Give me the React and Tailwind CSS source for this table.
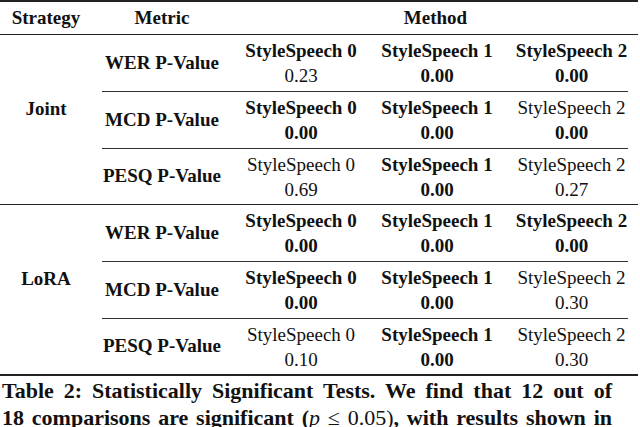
import React from "react";

const mk = (arr) => arr.map((c, i) => ({ nb: c[0], v: c[1], vb: c[2], i }));

const groups = [
  {
    name: "Joint",
    rows: [
      { metric: "WER P-Value", cells: mk([[1, "0.23", 0], [1, "0.00", 1], [1, "0.00", 1]]) },
      { metric: "MCD P-Value", cells: mk([[1, "0.00", 1], [1, "0.00", 1], [0, "0.00", 1]]) },
      { metric: "PESQ P-Value", cells: mk([[0, "0.69", 0], [1, "0.00", 1], [0, "0.27", 0]]) },
    ],
  },
  {
    name: "LoRA",
    rows: [
      { metric: "WER P-Value", cells: mk([[1, "0.00", 1], [1, "0.00", 1], [1, "0.00", 1]]) },
      { metric: "MCD P-Value", cells: mk([[1, "0.00", 1], [1, "0.00", 1], [0, "0.30", 0]]) },
      { metric: "PESQ P-Value", cells: mk([[0, "0.10", 0], [1, "0.00", 1], [0, "0.30", 0]]) },
    ],
  },
];

const colW = ["w-[136px]", "w-[136px]", "w-[133px]"];

function Row({ row, h }) {
  return (
    <div className={`flex ${h}`}>
      <div className="w-[131px] flex items-center justify-center pr-[11px] font-bold">{row.metric}</div>
      {row.cells.map((c) => (
        <div key={c.i} className={`${colW[c.i]} flex flex-col items-center justify-center leading-[25px]`}>
          <span className={c.nb ? "font-bold" : ""}>StyleSpeech {c.i}</span>
          <span className={c.vb ? "font-bold" : ""}>{c.v}</span>
        </div>
      ))}
    </div>
  );
}

function Group({ g, last }) {
  return (
    <div className={`flex ${last ? "border-b-2" : "border-b"} border-[#222]`}>
      <div className="w-[102px] flex items-center justify-center pr-[10px] pb-[20px] font-bold">{g.name}</div>
      <div className="flex flex-col">
        <Row row={g.rows[0]} h="h-[56px]" />
        <div className="h-px bg-[#333] mr-[10px]" />
        <Row row={g.rows[1]} h="h-[56px]" />
        <div className="h-px bg-[#333] mr-[10px]" />
        <Row row={g.rows[2]} h="h-[55px]" />
      </div>
    </div>
  );
}

export default function App() {
  return (
    <div className="w-[640px] h-[427px] overflow-hidden bg-white text-[#111] [font-family:'Liberation_Serif','Times_New_Roman',serif] text-[19px]">
      <div className="w-[638px]">
        <div className="flex h-[35px] border-t-2 border-b border-[#222] items-center font-bold">
          <div className="w-[102px] text-center pr-[10px]">Strategy</div>
          <div className="w-[131px] text-center pr-[11px]">Metric</div>
          <div className="w-[405px] text-center">Method</div>
        </div>
        <Group g={groups[0]} />
        <Group g={groups[1]} last />
      </div>
      <div className="w-[612px] pl-[2px] text-[22px] leading-[27px] font-bold mt-[1px]">
        <div className="text-justify [text-align-last:justify]">Table 2: Statistically Significant Tests. We find that 12 out of</div>
        <div className="text-justify [text-align-last:justify]">
          18 comparisons are significant (<span className="italic font-normal">p</span> <span className="font-normal">≤ 0.05)</span>, with results shown in
        </div>
      </div>
    </div>
  );
}
